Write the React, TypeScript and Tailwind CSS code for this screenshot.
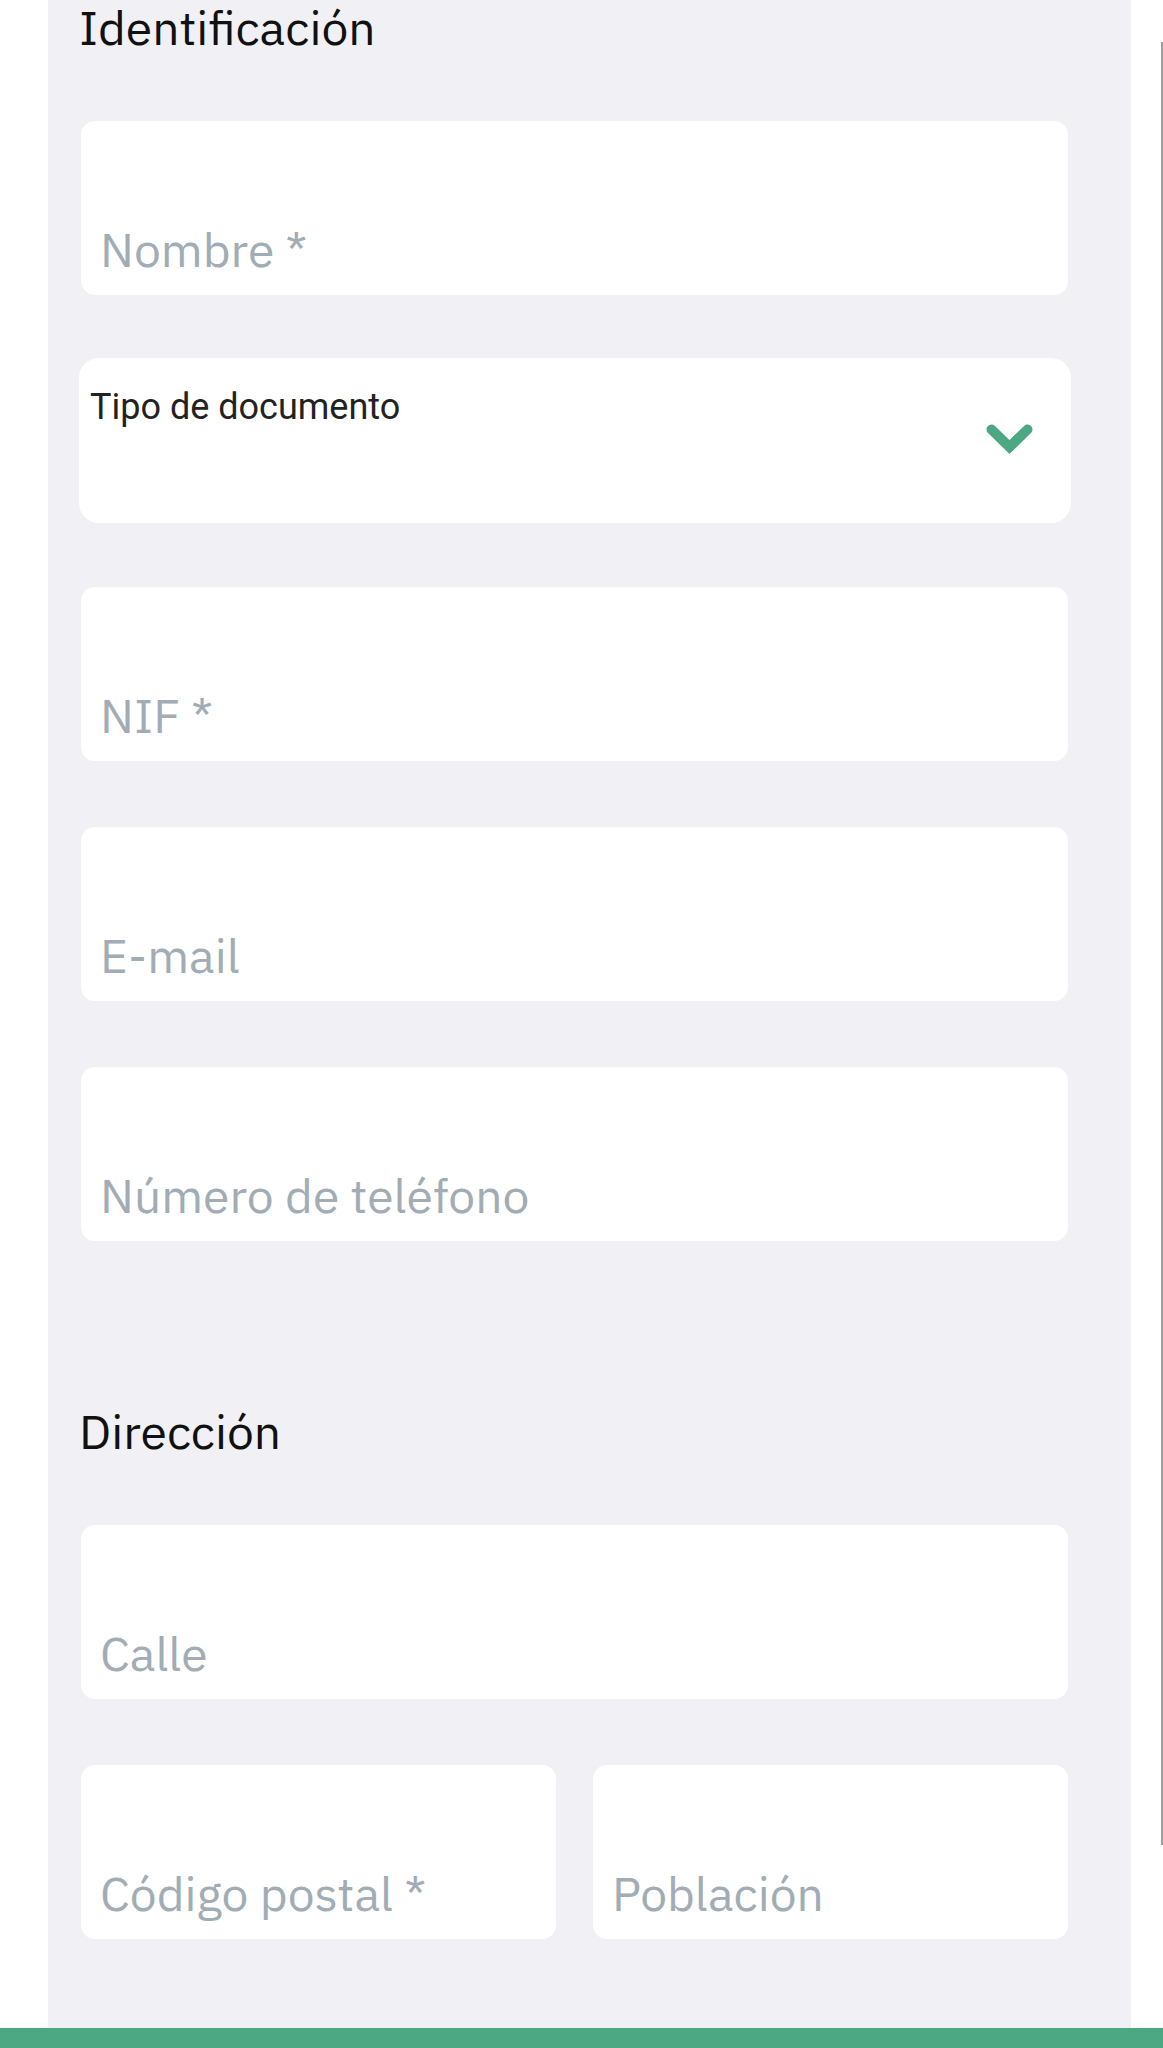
import React from "react";

const plex = { fontFamily: '"IBM Plex Sans", "Noto Sans", sans-serif' };

function Field({ label, className = "" }: { label: string; className?: string }) {
  return (
    <div
      className={`flex h-[174px] items-end rounded-[14px] bg-white pb-[22px] pl-[19px] ${className}`}
    >
      <span className="whitespace-nowrap text-[48px] leading-none text-[#a1acb5]" style={plex}>
        {label}
      </span>
    </div>
  );
}

function Chevron() {
  return (
    <svg className="block" width="47" height="30" viewBox="0 0 47 30" fill="none">
      <path
        d="M5.5 5.5 L23.5 23 L41.5 5.5"
        stroke="#4ca882"
        strokeWidth="10"
        strokeLinecap="round"
        strokeLinejoin="miter"
      />
    </svg>
  );
}

export default function App() {
  return (
    <div className="relative min-h-[2048px] w-[1163px] overflow-hidden bg-white">
      <div className="ml-[48px] h-[2028px] w-[1083px] bg-[#f0f0f5] pl-[33px] pr-[63px] pt-[3px]">
        <h2 className="-ml-[2px] text-[48px] font-normal leading-none text-[#111111]" style={plex}>
          Identificación
        </h2>

        <Field label="Nombre *" className="mt-[70px]" />

        <div className="ml-[-2px] mt-[63px] flex h-[165px] w-[992px] items-start justify-between rounded-[20px] bg-white pl-[11px] pr-[38px] pt-[31px]">
          <span
            className="text-[36px] leading-none text-[#222222]"
            style={{ fontFamily: 'Roboto, "Noto Sans", sans-serif' }}
          >
            Tipo de documento
          </span>
          <div className="mt-[35px]">
            <Chevron />
          </div>
        </div>

        <Field label="NIF *" className="mt-[64px]" />
        <Field label="E-mail" className="mt-[66px]" />
        <Field label="Número de teléfono" className="mt-[66px]" />

        <h2 className="-ml-[2px] mt-[166px] text-[48px] font-normal leading-none text-[#111111]" style={plex}>
          Dirección
        </h2>

        <Field label="Calle" className="mt-[70px]" />

        <div className="mt-[66px] grid grid-cols-2 gap-[37px]">
          <Field label="Código postal *" />
          <Field label="Población" />
        </div>
      </div>
      <div className="h-[20px] w-full bg-[#4ca882]" />
      <div className="absolute right-0 top-[42px] h-[1803px] w-[2px] bg-[#9e9e9e]" />
    </div>
  );
}
